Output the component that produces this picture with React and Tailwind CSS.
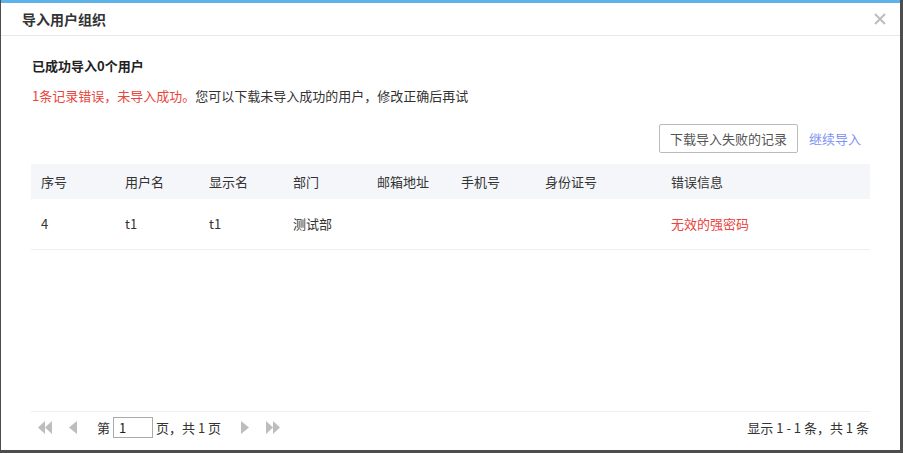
import React from "react";

const font = { fontFamily: '"Microsoft YaHei", "Noto Sans CJK SC", "Noto Sans", sans-serif' };

function TriLeft() {
  return (
    <svg width="8" height="13" viewBox="0 0 8 13"><path d="M8 0 L0 6.5 L8 13 Z" fill="#bdbdbd" /></svg>
  );
}
function TriRight() {
  return (
    <svg width="8" height="13" viewBox="0 0 8 13"><path d="M0 0 L8 6.5 L0 13 Z" fill="#bdbdbd" /></svg>
  );
}
function DoubleLeft() {
  return (
    <svg width="15" height="13" viewBox="0 0 15 13">
      <path d="M7 0 L0 6.5 L7 13 Z" fill="#bdbdbd" />
      <path d="M14 0 L7 6.5 L14 13 Z" fill="#bdbdbd" />
    </svg>
  );
}
function DoubleRight() {
  return (
    <svg width="15" height="13" viewBox="0 0 15 13">
      <path d="M1 0 L8 6.5 L1 13 Z" fill="#bdbdbd" />
      <path d="M8 0 L15 6.5 L8 13 Z" fill="#bdbdbd" />
    </svg>
  );
}

const cols = [
  { label: "序号", w: "w-[84px]" },
  { label: "用户名", w: "w-[84px]" },
  { label: "显示名", w: "w-[84px]" },
  { label: "部门", w: "w-[84px]" },
  { label: "邮箱地址", w: "w-[84px]" },
  { label: "手机号", w: "w-[84px]" },
  { label: "身份证号", w: "w-[126px]" },
  { label: "错误信息", w: "flex-1" },
];

const row = ["4", "t1", "t1", "测试部", "", "", "", "无效的强密码"];

export default function App() {
  return (
    <div className="w-[903px] h-[453px] bg-[#4d4d4d] pl-[1px] pr-[3px] pb-[3px]" style={font}>
      <div className="w-full h-full bg-white border-t-[3px] border-[#5db2ea] flex flex-col">
        <div className="h-[33px] border-b border-[#e8e8e8] flex items-center justify-between pl-[21px] pr-[14px]">
          <span className="text-[14px] font-bold text-[#333]">导入用户组织</span>
          <svg width="12" height="12" viewBox="0 0 12 12" className="mb-[1px]">
            <path d="M1 1 L11 11 M11 1 L1 11" stroke="#bdbdbd" strokeWidth="2" />
          </svg>
        </div>
        <div className="flex-1 px-[30px] pt-[20px]">
          <div className="pl-[1px] text-[13px] leading-[20px] font-bold text-[#222]">已成功导入0个用户</div>
          <div className="pl-[1px] mt-[10px] text-[13px] leading-[20px] text-[#333]">
            <span className="text-[#e8453c]">1条记录错误，未导入成功。</span>您可以下载未导入成功的用户，修改正确后再试
          </div>
          <div className="mt-[18px] flex justify-end items-center pr-[9px]">
            <button className="h-[29px] px-[10px] border border-[#bbb] rounded-[2px] text-[13px] text-[#555] bg-white">下载导入失败的记录</button>
            <span className="ml-[11px] text-[13px] text-[#7f93f2]">继续导入</span>
          </div>
          <div className="mt-[11px]">
            <div className="h-[35px] bg-[#f5f6fa] flex items-center text-[13px] text-[#333]">
              {cols.map((c) => (
                <div key={c.label} className={`${c.w} pl-[10px]`}>{c.label}</div>
              ))}
            </div>
            <div className="h-[51px] border-b border-[#eeeeee] flex items-center text-[13px] text-[#333]">
              {cols.map((c, i) => (
                <div key={c.label} className={`${c.w} pl-[10px] ${i === 7 ? "text-[#e8453c]" : ""}`}>{row[i]}</div>
              ))}
            </div>
          </div>
        </div>
        <div className="mx-[30px] border-t border-[#eeeeee] h-[39px] pb-[7px] flex items-center justify-between text-[13px] text-[#333]">
          <div className="flex items-center">
            <span className="ml-[7px]"><DoubleLeft /></span>
            <span className="ml-[16px]"><TriLeft /></span>
            <span className="ml-[20px]">第</span>
            <div className="ml-[3px] w-[40px] h-[21px] border border-[#aaa] flex items-center pl-[5px] text-[13px] text-[#222]">1</div>
            <span className="ml-[3px]">页，共 1 页</span>
            <span className="ml-[20px]"><TriRight /></span>
            <span className="ml-[16px]"><DoubleRight /></span>
          </div>
          <span className="mr-[1px]">显示 1 - 1 条，共 1 条</span>
        </div>
      </div>
    </div>
  );
}
